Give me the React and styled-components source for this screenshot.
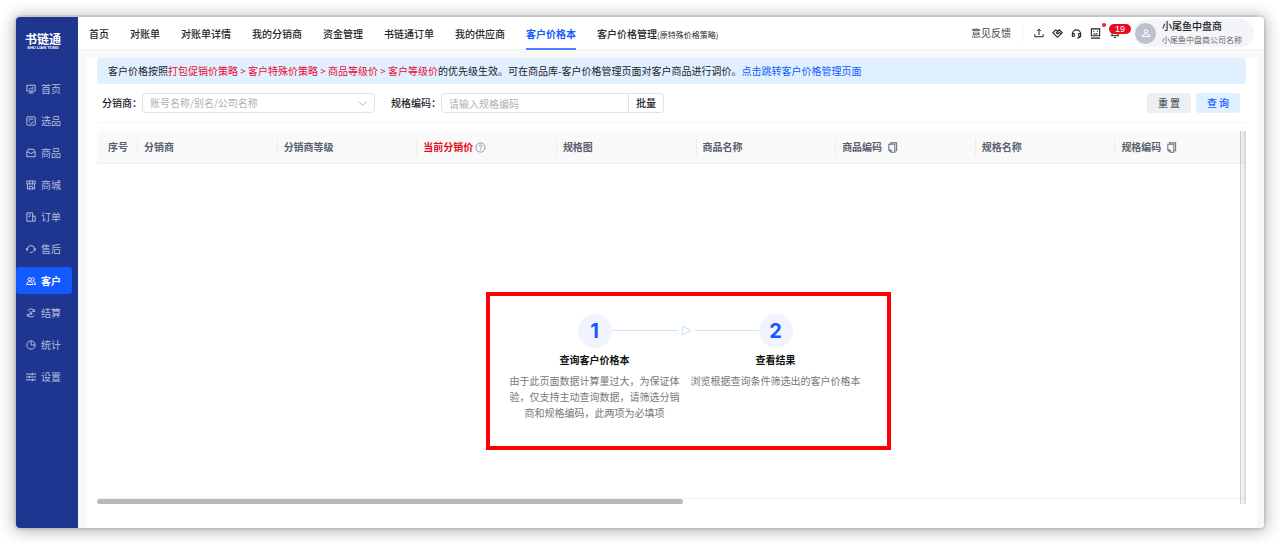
import React from 'react';
import styled, { createGlobalStyle } from 'styled-components';

const GlobalStyle = createGlobalStyle`
  * {
    box-sizing: border-box;
  }

  body {
    margin: 0;
    background-color: #fff;
    color: #1d2129;
    font-family: "Noto Sans CJK SC", sans-serif;
    font-size: 10px;
    line-height: 16px;
  }

  button, input, select {
    font: inherit;
    color: inherit;
  }

  a {
    text-decoration: none;
    color: inherit;
  }

  svg {
    display: block;
    flex-shrink: 0;
  }
`;

const Page = styled.div`
  display: flex;
  min-height: 100vh;
  padding: 17px 16px 16px;
`;

const Shell = styled.div`
  flex: 1;
  min-width: 0;
  display: flex;
  overflow: hidden;
  border-radius: 4px;
  background-color: #f8f8f8;
`;

const Shadow = styled.div`
  flex: 1;
  min-width: 0;
  display: flex;
  border-radius: 4px;
  box-shadow: 0 0 0 2px rgba(0, 0, 0, .08), 0 1px 16px 2px rgba(0, 0, 0, .3);
`;

const Sidebar = styled.aside`
  flex: 0 0 62px;
  background-color: #1f3691;
  color: #b4bddc;
`;

const Logo = styled.div`
  display: flex;
  flex-direction: column;
  align-items: center;
  padding: 14px 8px 0 0;
  height: 58px;
  color: #fff;
`;

const LogoName = styled.strong`
  font-size: 12px;
  line-height: 15px;
`;

const LogoSub = styled.span`
  font-family: "Liberation Sans", sans-serif;
  font-size: 4px;
  font-weight: bold;
  line-height: 4px;
  white-space: nowrap;
`;

const SideNav = styled.nav`
  display: flex;
  flex-direction: column;
  gap: 5px;
`;

const SideLink = styled.a`
  display: flex;
  align-items: center;
  gap: 5px;
  height: 27px;
  margin-right: 6px;
  padding-left: 10px;
  border-radius: 3px;
  color: ${({ $active }) => ($active ? '#fff' : 'inherit')};
  font-weight: ${({ $active }) => ($active ? 700 : 400)};
  background-color: ${({ $active }) => ($active ? '#125aff' : 'transparent')};
`;

const Main = styled.div`
  flex: 1;
  min-width: 0;
  display: flex;
  flex-direction: column;
`;

const Header = styled.header`
  display: flex;
  justify-content: space-between;
  height: 33px;
  padding: 0 10px 0 11px;
  background-color: #fff;
  border-bottom: 1px solid #f2f2f2;
`;

const TopNav = styled.nav`
  display: flex;
  gap: 21px;
  white-space: nowrap;
`;

const TopLink = styled.a`
  height: 33px;
  line-height: 33px;
  font-weight: ${({ $active }) => ($active ? 700 : 500)};
  color: ${({ $active }) => ($active ? '#125aff' : '#262626')};
  border-bottom: 2px solid ${({ $active }) => ($active ? '#4a80ff' : 'transparent')};
`;

const Small = styled.small`
  font-size: 8px;
  font-weight: 400;
`;

const Tools = styled.div`
  display: flex;
  align-items: center;
  white-space: nowrap;
`;

const Feedback = styled.a`
  padding-right: 11px;
  border-right: 1px solid #f2f2f2;
  margin-right: 6px;
  color: #444;
`;

const IconButton = styled.button`
  position: relative;
  display: flex;
  justify-content: center;
  width: 19px;
  padding: 0;
  border: 0;
  background: none;
  color: #222;
  cursor: pointer;
`;

const Dot = styled.span`
  position: absolute;
  top: -5px;
  right: -1px;
  width: 4px;
  height: 4px;
  border-radius: 50%;
  background-color: #f5222d;
`;

const Badge = styled.span`
  position: absolute;
  top: -4px;
  left: 4px;
  width: 22px;
  height: 10px;
  border-radius: 5px;
  background-color: #ea0b20;
  color: #fff;
  font-family: "Liberation Sans", sans-serif;
  font-size: 9px;
  line-height: 10px;
`;

const User = styled.a`
  display: flex;
  align-items: center;
  gap: 6px;
  height: 28px;
  margin-left: 10px;
  padding: 0 12px 0 1px;
  border-radius: 14px;
  background-color: #f4f5f9;
`;

const Avatar = styled.span`
  display: flex;
  align-items: center;
  justify-content: center;
  width: 21px;
  height: 21px;
  border-radius: 50%;
  background-color: #bcc1cc;
  color: #fff;
`;

const UserText = styled.span`
  display: flex;
  flex-direction: column;
  line-height: 14px;
  font-weight: 500;
`;

const Company = styled.span`
  color: #666;
  font-size: 8px;
  font-weight: 400;
  line-height: 14px;
`;

const Panel = styled.main`
  flex: 1;
  margin: 8px 7px 0 8px;
  padding: 0 11px 24px;
  background-color: #fff;
`;

const Banner = styled.p`
  margin: 0;
  padding: 5px 11px;
  border-radius: 4px;
  background-color: #e0f0ff;
`;

const Red = styled.span`
  color: #ea0b32;
`;

const BannerLink = styled.a`
  color: #125aff;
`;

const Filters = styled.form`
  display: flex;
  align-items: center;
  justify-content: space-between;
  padding: 9px 6px 9px 5px;
  border-bottom: 1px solid #f5f5f5;
`;

const Group = styled.div`
  display: flex;
  align-items: center;
  gap: ${({ $gap }) => $gap || 0}px;
`;

const Label = styled.label`
  font-weight: 500;
`;

const SelectBox = styled.div`
  display: grid;
  align-items: center;
  width: 233px;

  > * {
    grid-area: 1 / 1;
  }

  svg {
    justify-self: end;
    margin-right: 8px;
    color: #b0b0b0;
    pointer-events: none;
  }
`;

const Select = styled.select`
  appearance: none;
  height: 20px;
  padding: 0 20px 0 7px;
  border: 1px solid #e2e2e2;
  border-radius: 4px;
  background-color: #fff;
  color: #b0b0b0;
`;

const Input = styled.input`
  width: 188px;
  height: 20px;
  padding: 0 7px;
  border: 1px solid #e2e2e2;
  border-radius: 4px 0 0 4px;

  &::placeholder {
    color: #b0b0b0;
  }
`;

const BatchButton = styled.button`
  width: 35px;
  height: 20px;
  padding: 0;
  border: 1px solid #e2e2e2;
  border-left: 0;
  border-radius: 0 4px 4px 0;
  background-color: #fff;
  font-weight: 500;
`;

const Button = styled.button`
  width: 44px;
  height: 20px;
  padding: 0;
  border: 0;
  border-radius: 3px;
  font-weight: 500;
  color: ${({ $primary }) => ($primary ? '#125aff' : '#555b66')};
  background-color: ${({ $primary }) => ($primary ? '#e0f0ff' : '#eeeff3')};
`;

const TableWrap = styled.div`
  position: relative;
  margin-top: 8px;
  overflow: hidden;
  border-radius: 4px 0 0 0;
`;

const EdgeShadow = styled.div`
  position: absolute;
  top: 0;
  right: 0;
  bottom: 0;
  width: 6px;
  border-left: 1px solid rgba(0, 0, 0, .07);
  background: linear-gradient(to right, rgba(0, 0, 0, .02), rgba(0, 0, 0, .14));
`;

const Table = styled.table`
  width: calc(100% + 8px);
  table-layout: fixed;
  border-collapse: separate;
  border-spacing: 0;
`;

const Th = styled.th`
  width: ${({ $first }) => ($first ? '40px' : 'auto')};
  height: 33px;
  padding: 8px 0;
  border-bottom: 1px solid #f0f0f0;
  background-color: #f9f9f9;
  color: ${({ $red }) => ($red ? '#ea0b20' : '#5a616e')};
  font-weight: 700;
  text-align: left;
`;

const ThInner = styled.div`
  display: flex;
  align-items: center;
  gap: ${({ $gap }) => $gap || 0}px;
  padding-left: ${({ $first }) => ($first ? 10 : 6)}px;
  border-left: 1px solid ${({ $first }) => ($first ? 'transparent' : '#ececec')};

  svg {
    color: #6b7280;
  }
`;

const EmptyCell = styled.td`
  padding: 128px 0 48px 25px;
  border-bottom: 1px solid #f0f0f0;
`;

const Guide = styled.section`
  width: 405px;
  margin: 0 auto;
  padding: 18px 21px 25px 20px;
  border: 4px solid #fb0007;
`;

const Steps = styled.ol`
  display: grid;
  grid-template-columns: 170px 170px;
  column-gap: 11px;
  margin: 0;
  padding: 0;
  list-style: none;
  text-align: center;
`;

const Step = styled.li`
  display: flex;
  flex-direction: column;
  align-items: center;
`;

const Circle = styled.span`
  width: 34px;
  height: 34px;
  border-radius: 50%;
  background-color: #f1f4ff;
  color: #125aff;
  font-family: Inter, sans-serif;
  font-size: 20px;
  font-weight: 700;
  line-height: 34px;
`;

const CircleRow = styled.div`
  position: relative;
  display: flex;
  justify-content: center;
  width: 100%;
`;

const Connector = styled.span`
  position: absolute;
  top: 10px;
  left: 102px;
  display: flex;
  align-items: center;
  gap: 3px;
  width: 147px;
  height: 13px;
  color: #cfe2fd;

  &::before, &::after {
    content: '';
    flex: 17;
    height: 1px;
    background-color: #cfe2fd;
  }

  &::after {
    flex: 16;
  }
`;

const StepTitle = styled.strong`
  margin: 4px 0 5px;
  color: #111;
`;

const StepText = styled.p`
  margin: 0;
  color: #777;
`;

const ScrollBar = styled.div`
  height: 5px;
  width: 51%;
  border-radius: 3px;
  background-color: #b9b9b9;
`;

const Icon = ({ size = 10, width = 1.2, children }) => (
  <svg
    width={size}
    height={size}
    viewBox="0 0 12 12"
    fill="none"
    stroke="currentColor"
    strokeWidth={width}
    aria-hidden="true"
  >
    {children}
  </svg>
);

const sideItems = [
  ['首页', <><path d="M1 1.5h10v7H1zM3 10.8h6M6 8.5v2" /><path d="M3.8 6.7V5.2M6 6.7V4.2M8.2 6.7V3.4" /></>],
  ['选品', <><rect x="1" y="1" width="10" height="10" rx="1" /><path d="M3 3.7h6M3 6h2M5 8l1.5 1.2L9 6.3" /></>],
  ['商品', <><path d="M1 5l1.5-3.500h7L11 5v5.500H1zM1 5h3l.8 1.500h2.400L8 5h3" /></>],
  ['商城', <><path d="M1 1.2h10v3.5H1zM1.7 5v5.8h8.6V5M4.3 1.2v4M7.7 1.2v4M4 10.8V7.7h4v3.1" /></>],
  ['订单', <><path d="M1 1h7v10H1zM8 5h3v6H8M3 3.5h3M3 5.5h2" /></>],
  ['售后', <><path d="M2 7.500V5.800a4 4 0 0 1 8 0c0 2.700-1.500 4.400-4 4.400H5" /><path d="M1 5v2.800M11 5v2.800" strokeWidth="1.800" /></>],
  ['客户', <><circle cx="4.5" cy="4" r="2" /><path d="M.8 10.2c0-4.5 7.4-4.5 7.4 0zM7.5 2.2c2.8-.6 3.2 3 .7 3.6 2 .4 3 2 3 4.4H9.5" /></>],
  ['结算', <><path d="M10.8 5A5 5 0 0 0 2 3M1.2 7A5 5 0 0 0 10 9M9.8 1.5V4H7.6M2.2 10.5V8h2.2M4.2 3.7L6 5.7l1.8-2M6 5.7v3M4.2 6.5h3.6" /></>],
  ['统计', <><circle cx="6" cy="6" r="5" /><path d="M6 1v5h5" /></>],
  ['设置', <><path d="M0 2.5h12M0 6h12M0 9.5h12M7.5 1v3M4 4.5v3M8 8v3" /></>],
];

const topItems = ['首页', '对账单', '对账单详情', '我的分销商', '资金管理', '书链通订单', '我的供应商', '客户价格本'];

const CopyIcon = () => (
  <Icon size={11}>
    <path d="M4 2.5V1h6.5v8.5H9" />
    <path d="M2 2.5h6.5v8.7H4.5L2 8.7zM2 8.7h2.5v2.5" />
  </Icon>
);

const HelpIcon = () => (
  <Icon size={11} width={0.8}>
    <circle cx="6" cy="6" r="5" />
    <path d="M4.5 4.8c0-2.1 3-2 3-.2C7.5 5.7 6 5.7 6 7.1M6 8v1" />
  </Icon>
);

const columns = [
  { title: '序号', first: true },
  { title: '分销商' },
  { title: '分销商等级' },
  { title: '当前分销价', red: true, icon: <HelpIcon />, gap: 2 },
  { title: '规格图' },
  { title: '商品名称' },
  { title: '商品编码', icon: <CopyIcon />, gap: 5 },
  { title: '规格名称' },
  { title: '规格编码', icon: <CopyIcon />, gap: 5 },
];

const SideBar = () => (
  <Sidebar>
    <Logo>
      <LogoName>书链通</LogoName>
      <LogoSub>SHU LIAN TONG</LogoSub>
    </Logo>
    <SideNav>
      {sideItems.map(([name, icon]) => (
        <SideLink href="#" key={name} $active={name === '客户'}>
          <Icon>{icon}</Icon>
          {name}
        </SideLink>
      ))}
    </SideNav>
  </Sidebar>
);

const TopBar = () => (
  <Header>
    <TopNav>
      {topItems.map(name => (
        <TopLink href="#" key={name} $active={name === '客户价格本'}>{name}</TopLink>
      ))}
      <TopLink href="#">客户价格管理<Small>(原特殊价格策略)</Small></TopLink>
    </TopNav>
    <Tools>
      <Feedback href="#">意见反馈</Feedback>
      <IconButton aria-label="上传">
        <Icon><path d="M1 7.5v3h10v-3M6 8.5v-7M3.8 3.5L6 1.3l2.2 2.2" /></Icon>
      </IconButton>
      <IconButton aria-label="合作">
        <Icon size={11}><path d="M6 3L4 2 .8 5.200l5.200 5 5.200-5L8 2 4.800 5.200 6.200 6.500 8 4.800l2 2" /></Icon>
      </IconButton>
      <IconButton aria-label="客服">
        <Icon size={11}><path d="M1.5 6.500a4.500 4.500 0 0 1 9 0v1.500c0 1.800-1.500 3-3.700 3M1.500 6h2v3h-2zM8.500 6h2v3h-2z" /></Icon>
      </IconButton>
      <IconButton aria-label="消息">
        <Icon size={11}><path d="M1.5 1h9v7.5h-9zM1 11h10M4 3v1.2M8 3v1.2M3.8 6c1 .8 3.4.8 4.4 0" /></Icon>
        <Dot />
      </IconButton>
      <IconButton aria-label="通知">
        <Icon><path d="M2.5 9V5a3.5 3.5 0 0 1 7 0v4M1 9.2h10M4.7 11.3h2.6" /></Icon>
        <Badge>19</Badge>
      </IconButton>
      <User href="#">
        <Avatar>
          <Icon><circle cx="6" cy="4" r="2.2" /><path d="M1.5 10.3V8.5h2L5 6.5h2l1.5 2h2v1.8z" /></Icon>
        </Avatar>
        <UserText>
          小尾鱼中盘商
          <Company>小尾鱼中盘商公司名称</Company>
        </UserText>
      </User>
    </Tools>
  </Header>
);

const FilterBar = () => (
  <Filters onSubmit={e => e.preventDefault()}>
    <Group $gap={16}>
      <Group>
        <Label htmlFor="dealer">分销商：</Label>
        <SelectBox>
          <Select id="dealer">
            <option>账号名称/别名/公司名称</option>
          </Select>
          <Icon size={9}><path d="M1 3.5l5 5 5-5" /></Icon>
        </SelectBox>
      </Group>
      <Group>
        <Label htmlFor="code">规格编码：</Label>
        <Input id="code" placeholder="请输入规格编码" />
        <BatchButton type="button">批量</BatchButton>
      </Group>
    </Group>
    <Group $gap={5}>
      <Button type="reset">重 置</Button>
      <Button type="submit" $primary>查 询</Button>
    </Group>
  </Filters>
);

const GuideBox = () => (
  <Guide>
    <Steps>
      <Step>
        <CircleRow>
          <Circle>1</Circle>
          <Connector>
            <Icon size={11}><path d="M1.5 1.2v9.6L10.5 6z" strokeLinejoin="round" /></Icon>
          </Connector>
        </CircleRow>
        <StepTitle>查询客户价格本</StepTitle>
        <StepText>由于此页面数据计算量过大，为保证体验，仅支持主动查询数据，请筛选分销商和规格编码，此两项为必填项</StepText>
      </Step>
      <Step>
        <Circle>2</Circle>
        <StepTitle>查看结果</StepTitle>
        <StepText>浏览根据查询条件筛选出的客户价格本</StepText>
      </Step>
    </Steps>
  </Guide>
);

const PriceTable = () => (
  <TableWrap>
    <Table>
      <thead>
        <tr>
          {columns.map(({ title, first, red, icon, gap }) => (
            <Th key={title} $first={first} $red={red}>
              <ThInner $first={first} $gap={gap}>{title}{icon}</ThInner>
            </Th>
          ))}
        </tr>
      </thead>
      <tbody>
        <tr>
          <EmptyCell colSpan={columns.length}><GuideBox /></EmptyCell>
        </tr>
      </tbody>
    </Table>
    <ScrollBar />
    <EdgeShadow />
  </TableWrap>
);

const App = () => (
  <Page lang="zh-CN">
    <GlobalStyle />
    <Shadow>
      <Shell>
        <SideBar />
        <Main>
          <TopBar />
          <Panel>
            <Banner>
              客户价格按照<Red>打包促销价策略 &gt; 客户特殊价策略 &gt; 商品等级价 &gt; 客户等级价</Red>的优先级生效。可在商品库-客户价格管理页面对客户商品进行调价。<BannerLink href="#">点击跳转客户价格管理页面</BannerLink>
            </Banner>
            <FilterBar />
            <PriceTable />
          </Panel>
        </Main>
      </Shell>
    </Shadow>
  </Page>
);

export default App;
